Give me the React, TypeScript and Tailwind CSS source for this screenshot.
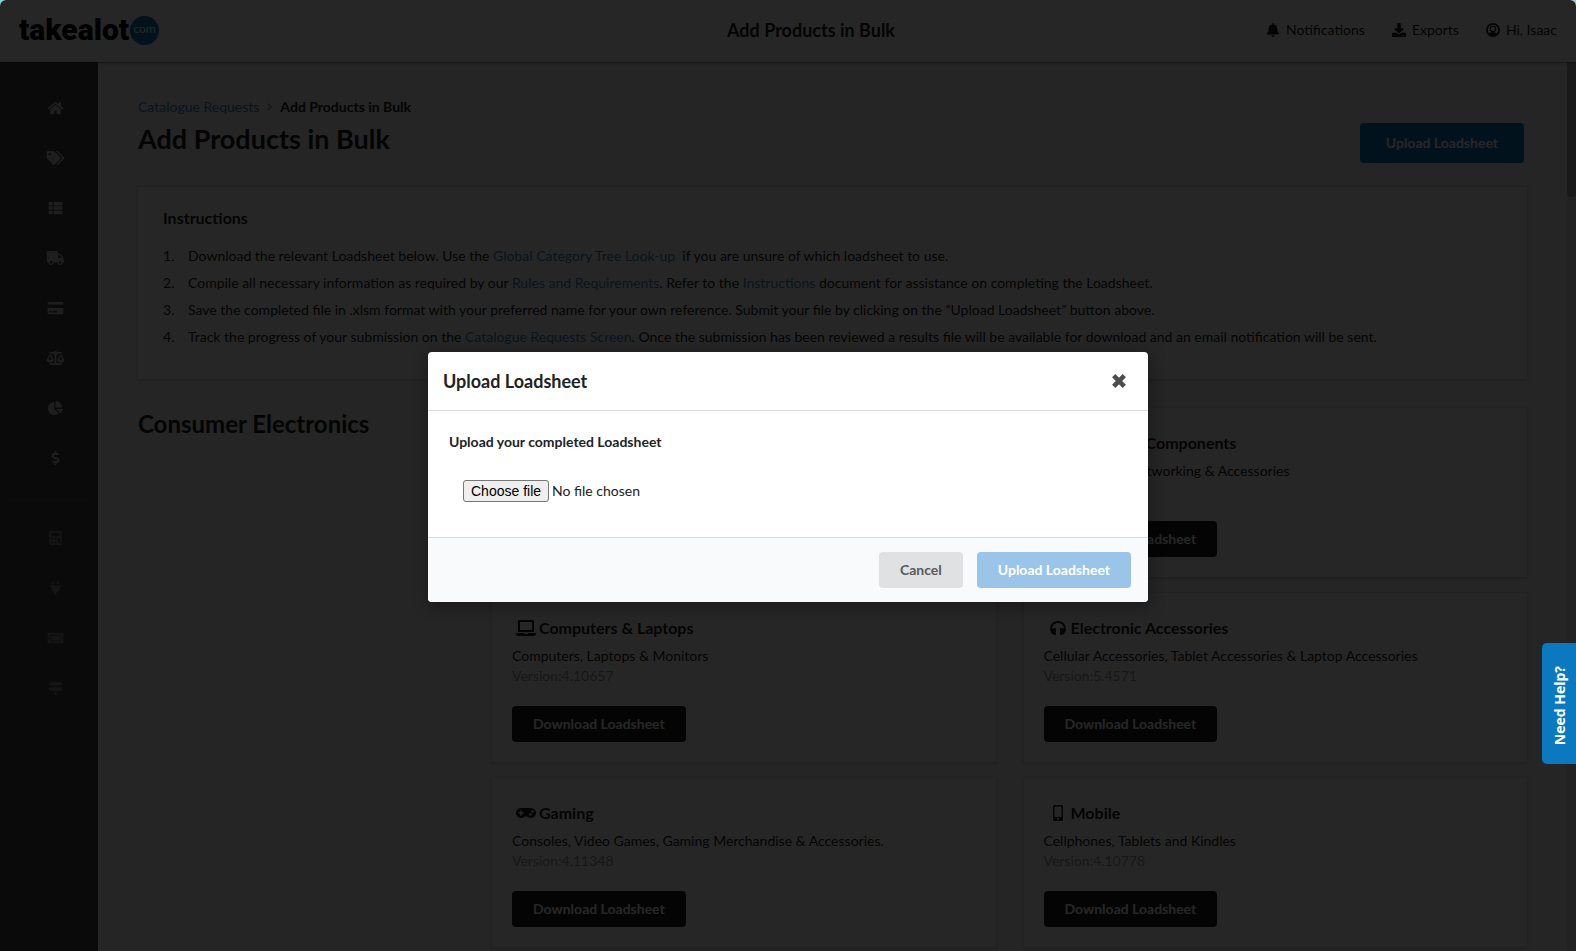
import { useState } from "react";
import type { ReactNode } from "react";
import type { IconType } from "react-icons";
import {
  FaBalanceScale,
  FaBell,
  FaCalculator,
  FaChartPie,
  FaCreditCard,
  FaDollarSign,
  FaDownload,
  FaGamepad,
  FaHeadphones,
  FaHome,
  FaLaptop,
  FaMapSigns,
  FaMicrochip,
  FaMobileAlt,
  FaPlug,
  FaTags,
  FaThList,
  FaTicketAlt,
  FaTruck,
  FaTv,
} from "react-icons/fa";

const mainNav: { label: string; icon: IconType }[] = [
  { label: "Home", icon: FaHome },
  { label: "Offers", icon: FaTags },
  { label: "Catalogue", icon: FaThList },
  { label: "Shipments", icon: FaTruck },
  { label: "Payments", icon: FaCreditCard },
  { label: "Balances", icon: FaBalanceScale },
  { label: "Reports", icon: FaChartPie },
  { label: "Sales", icon: FaDollarSign },
];

const toolNav: { label: string; icon: IconType }[] = [
  { label: "Calculator", icon: FaCalculator },
  { label: "Integrations", icon: FaPlug },
  { label: "Tickets", icon: FaTicketAlt },
  { label: "Guides", icon: FaMapSigns },
];

const loadsheets: { title: string; description: string; version: string; icon: IconType }[] = [
  { title: "Audio & TV", description: "Televisions, Audio & Video", version: "4.10655", icon: FaTv },
  { title: "Computer Components", description: "Components, Networking & Accessories", version: "4.10656", icon: FaMicrochip },
  { title: "Computers & Laptops", description: "Computers, Laptops & Monitors", version: "4.10657", icon: FaLaptop },
  {
    title: "Electronic Accessories",
    description: "Cellular Accessories, Tablet Accessories & Laptop Accessories",
    version: "5.4571",
    icon: FaHeadphones,
  },
  {
    title: "Gaming",
    description: "Consoles, Video Games, Gaming Merchandise & Accessories.",
    version: "4.11348",
    icon: FaGamepad,
  },
  { title: "Mobile", description: "Cellphones, Tablets and Kindles", version: "4.10778", icon: FaMobileAlt },
];

function TextLink({ children }: { children: ReactNode }) {
  return (
    <a href="#" className="text-[#4183c4]">
      {children}
    </a>
  );
}

function UserIcon() {
  return (
    <svg viewBox="0 0 14 14" className="size-[14px]" fill="none">
      <circle cx="7" cy="7" r="6.1" stroke="currentColor" strokeWidth="1.8" />
      <path d="M2 11.2c1-1.5 2.6-2 5-2s4 .5 5 2A7 7 0 0 1 7 13.6a7 7 0 0 1-5-2.4Z" fill="currentColor" />
      <circle cx="7" cy="5.9" r="2.7" stroke="currentColor" strokeWidth="1.1" />
    </svg>
  );
}

function HeaderLink({ icon, children }: { icon: ReactNode; children: ReactNode }) {
  return (
    <a href="#" className="flex items-center gap-[5px]">
      <span className="flex w-4 justify-center">{icon}</span>
      {children}
    </a>
  );
}

function Header() {
  return (
    <header className="relative z-10 grid h-[62px] shrink-0 grid-cols-[1fr_auto_1fr] items-center bg-white px-[19px] pb-[2px] shadow-[0_1px_2px_rgba(0,0,0,0.4)]">
      <a href="#" className="flex items-center gap-px text-black">
        <span className="font-['Roboto',sans-serif] text-[30px] leading-8 font-black">takealot</span>
        <span className="flex size-[29px] items-center justify-center rounded-full bg-[#0b79bf] pb-[2px] text-[12px] leading-4 text-white">
          com
        </span>
      </a>
      <div className="ml-[46px] text-[18px] leading-6 font-bold">Add Products in Bulk</div>
      <nav className="flex justify-end gap-[26px]">
        <HeaderLink icon={<FaBell size="auto" className="h-[14px]" />}>Notifications</HeaderLink>
        <HeaderLink icon={<FaDownload size="auto" className="h-[14px]" />}>Exports</HeaderLink>
        <HeaderLink icon={<UserIcon />}>Hi, Isaac</HeaderLink>
      </nav>
    </header>
  );
}

function Sidebar() {
  return (
    <aside className="w-[98px] shrink-0 bg-[#454545] pt-[21px] pl-[13px] text-[#c8c8c8]">
      <nav>
        {mainNav.map(({ label, icon: Icon }) => (
          <a key={label} href="#" aria-label={label} className="flex h-[50px] items-center justify-center">
            <Icon size="auto" className="h-[14px]" />
          </a>
        ))}
        <hr className="mt-4 mr-[5px] mb-[13px] -ml-2 border-[#505050]" />
        {toolNav.map(({ label, icon: Icon }) => (
          <a key={label} href="#" aria-label={label} className="flex h-[50px] items-center justify-center text-[#8c8c8c]">
            <Icon size="auto" className="h-[14px]" />
          </a>
        ))}
      </nav>
    </aside>
  );
}

function Instructions() {
  return (
    <section className="mt-6 h-48 bg-white px-[25px] pt-[21px] shadow-[0_1px_3px_rgba(0,0,0,0.2)]">
      <h2 className="text-base leading-5 font-bold">Instructions</h2>
      <ol className="mt-[14px] ml-[25px] list-none leading-[27px] [counter-reset:step] [&>li]:[counter-increment:step] [&>li]:before:inline-block [&>li]:before:w-[25px] [&>li]:before:-ml-[25px] [&>li]:before:content-[counter(step)_'.']">
        <li>
          Download the relevant Loadsheet below. Use the <TextLink>Global Category Tree Look-up</TextLink>
          &nbsp; if you are unsure of which loadsheet to use.
        </li>
        <li>
          Compile all necessary information as required by our <TextLink>Rules and Requirements</TextLink>. Refer to the{" "}
          <TextLink>Instructions</TextLink> document for assistance on completing the Loadsheet.
        </li>
        <li>
          Save the completed file in .xlsm format with your preferred name for your own reference. Submit your file by
          clicking on the “Upload Loadsheet” button above.
        </li>
        <li>
          Track the progress of your submission on the <TextLink>Catalogue Requests Screen</TextLink>. Once the
          submission has been reviewed a results file will be available for download and an email notification will be
          sent.
        </li>
      </ol>
    </section>
  );
}

function LoadsheetCards() {
  return (
    <section className="mt-[29px] flex">
      <h2 className="w-[354px] shrink-0 text-2xl leading-8 font-bold">Consumer Electronics</h2>
      <div className="grid flex-1 grid-cols-2 gap-x-7 gap-y-4">
        {loadsheets.map(({ title, description, version, icon: Icon }) => (
          <article key={title} className="bg-white px-5 pt-[25px] pb-5 shadow-[0_1px_3px_rgba(0,0,0,0.2)]">
            <h3 className="ml-1 flex items-center gap-[3px] text-base leading-5 font-bold">
              <span className="flex w-5 justify-center">
                <Icon size="auto" className="h-4" />
              </span>
              {title}
            </h3>
            <p className="mt-2 leading-5">{description}</p>
            <p className="leading-5 text-[#999]">Version:{version}</p>
            <button className="mt-5 h-9 rounded bg-[#1b1c1d] px-[21px] font-bold text-white">Download Loadsheet</button>
          </article>
        ))}
      </div>
    </section>
  );
}

function UploadModal({ onClose }: { onClose: () => void }) {
  const [fileName, setFileName] = useState("");

  return (
    <div
      role="dialog"
      aria-modal="true"
      aria-labelledby="upload-title"
      className="w-[720px] overflow-hidden rounded bg-white text-[#212223] shadow-[1px_3px_15px_2px_rgba(0,0,0,0.3)]"
    >
      <div className="flex h-[59px] items-center justify-between border-b border-[#dcdddd] pr-[22px] pl-[15px]">
        <h2 id="upload-title" className="text-[18px] leading-6 font-bold">
          Upload Loadsheet
        </h2>
        <button aria-label="Close" onClick={onClose} className="text-[#4d4d4d]">
          <svg viewBox="0 0 14 14" className="size-[14px]" fill="none" stroke="currentColor" strokeWidth="4.6">
            <path d="M1.7 1.7 12.3 12.3M12.3 1.7 1.7 12.3" />
          </svg>
        </button>
      </div>
      <div className="px-[21px] pt-5 pb-[35px]">
        <p className="leading-[22px] font-bold">Upload your completed Loadsheet</p>
        <div className="mt-[27px] ml-[14px] flex h-[22px] items-center gap-[3px]">
          <input
            id="loadsheet-file"
            type="file"
            accept=".xlsm"
            className="peer sr-only text-[0px] file:hidden"
            onChange={(e) => setFileName(e.target.files?.[0]?.name ?? "")}
          />
          <label
            htmlFor="loadsheet-file"
            className="h-[22px] rounded-[3px] border border-[#767676] bg-[#efefef] px-[7px] font-['Liberation_Sans',sans-serif] text-sm text-black peer-focus-visible:outline-2"
          >
            Choose file
          </label>
          <span>{fileName || "No file chosen"}</span>
        </div>
      </div>
      <div className="flex justify-end gap-[14px] border-t border-[#dcdddd] bg-[#f9fafb] py-[14px] pr-[17px]">
        <button onClick={onClose} className="h-9 rounded bg-[#e0e1e2] px-[21px] font-bold text-[#5a5a5b]">
          Cancel
        </button>
        <button disabled={!fileName} className="h-9 rounded bg-[#0b79cd] px-[21px] font-bold text-white disabled:bg-[#9ac5e8]">
          Upload Loadsheet
        </button>
      </div>
    </div>
  );
}

export default function App() {
  const [modalOpen, setModalOpen] = useState(true);

  return (
    <div className="bg-[#7fd6d3] font-['Lato',sans-serif] text-sm text-[#1b1c1d]">
      <div className="relative flex h-screen flex-col overflow-hidden rounded-t-[6px] bg-[#f3f3f3]">
        <Header />
        <div className="flex min-h-0 flex-1">
          <Sidebar />
          <main className="min-w-0 flex-1 overflow-hidden px-10 pt-[35px]">
            <div className="flex items-start justify-between">
              <div>
                <div className="flex items-center gap-2 leading-5">
                  <TextLink>Catalogue Requests</TextLink>
                  <svg viewBox="0 0 5 8" className="h-2 w-[5px]" fill="none" stroke="#999" strokeWidth="1.4">
                    <path d="M.8.8 4 4 .8 7.2" />
                  </svg>
                  <span className="font-bold">Add Products in Bulk</span>
                </div>
                <h1 className="mt-1 text-[27px] leading-9 font-bold">Add Products in Bulk</h1>
              </div>
              <button
                onClick={() => setModalOpen(true)}
                className="mt-[26px] mr-[3px] h-10 rounded bg-[#0b79bf] px-[26px] font-bold text-white"
              >
                Upload Loadsheet
              </button>
            </div>
            <Instructions />
            <LoadsheetCards />
          </main>
          <div className="w-[9px] shrink-0 bg-[#e4e4e4]">
            <div className="h-[135px] rounded-b bg-[#a6a6a6]" />
          </div>
        </div>
        {modalOpen && (
          <div className="absolute inset-0 z-20 flex items-center justify-center bg-black/85 pt-[3px]">
            <UploadModal onClose={() => setModalOpen(false)} />
          </div>
        )}
        <button className="absolute right-0 bottom-[187px] z-30 flex h-[121px] w-[34px] items-center justify-center rounded-l-[5px] bg-[#0b79bf] pt-1 pl-[2px] font-['Open_Sans',sans-serif] font-bold text-white">
          <span className="rotate-180 [writing-mode:vertical-rl]">Need Help?</span>
        </button>
      </div>
    </div>
  );
}
